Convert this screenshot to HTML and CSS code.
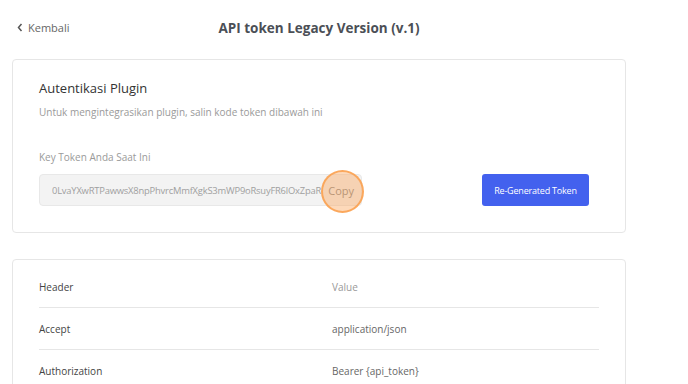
FILE: index.html
```html
<!DOCTYPE html>
<html lang="id">
<head>
<meta charset="utf-8">
<title>API token Legacy Version (v.1)</title>
<link rel="stylesheet" href="styles.css">
</head>
<body>
<div class="page">
  <header class="topbar">
    <a class="back" href="#">
      <svg class="chev" width="6" height="9" viewBox="0 0 6 9"><path d="M4.5 1 L1.5 4.5 L4.5 8" fill="none" stroke="#555" stroke-width="1.5"/></svg>
      <span>Kembali</span>
    </a>
    <h1 class="title">API token Legacy Version (v.1)</h1>
    <span></span>
  </header>

  <section class="card auth">
    <h2 class="auth-title">Autentikasi Plugin</h2>
    <p class="auth-sub">Untuk mengintegrasikan plugin, salin kode token dibawah ini</p>
    <label class="key-label">Key Token Anda Saat Ini</label>
    <div class="key-row">
      <div class="token-field">
        <span class="token-text">0LvaYXwRTPawwsX8npPhvrcMmfXgkS3mWP9oRsuyFR6lOxZpaR</span>
        <span class="copy">Copy<span class="click-ring"></span></span>
      </div>
      <button class="regen">Re-Generated Token</button>
    </div>
  </section>

  <section class="card table-card">
    <div class="row head"><span>Header</span><span class="val">Value</span></div>
    <div class="row"><span>Accept</span><span class="val">application/json</span></div>
    <div class="row"><span>Authorization</span><span class="val">Bearer {api_token}</span></div>
  </section>
</div>
</body>
</html>
```

FILE: styles.css
```css
* { box-sizing: border-box; }
body {
  margin: 0;
  background: #fff;
  font-family: "Open Sans", "Noto Sans", sans-serif;
  color: #333;
}
.page {
  width: 614px;
  margin-left: 12px;
}
.topbar {
  height: 59px;
  display: grid;
  grid-template-columns: 1fr auto 1fr;
  align-items: center;
  padding-bottom: 4px;
}
.back {
  display: flex;
  align-items: center;
  gap: 5px;
  padding-left: 5px;
  color: #666;
  text-decoration: none;
  font-size: 11px;
}
.title {
  margin: 0;
  font-size: 13.5px;
  font-weight: 700;
  color: #4b4f56;
}
.card {
  border: 1px solid #e6e6e6;
  border-radius: 4px;
  background: #fff;
}
.auth {
  height: 174px;
  padding: 18px 36px 0 26px;
}
.auth-title {
  margin: 0;
  font-size: 13px;
  font-weight: 400;
  color: #333;
  line-height: 20px;
}
.auth-sub {
  margin: 7px 0 0;
  font-size: 10px;
  color: #9a9a9a;
  line-height: 14px;
}
.key-label {
  display: block;
  margin-top: 31px;
  font-size: 10px;
  color: #9a9a9a;
  line-height: 14px;
}
.key-row {
  display: flex;
  justify-content: space-between;
  margin-top: 10px;
}
.token-field {
  position: relative;
  width: 323px;
  height: 32px;
  background: #f3f3f3;
  border: 1px solid #e8e8e8;
  border-radius: 4px;
  display: flex;
  align-items: center;
  padding-left: 12px;
}
.token-text {
  flex: 1;
  overflow: hidden;
  white-space: nowrap;
  font-size: 9.4px;
  color: #a0a0a0;
  letter-spacing: -0.2px;
}
.copy {
  position: relative;
  padding: 0 7px 0 3px;
  font-size: 11px;
  color: #8a8a8a;
}
.click-ring {
  position: absolute;
  left: 50%;
  top: 50%;
  width: 43px;
  height: 43px;
  margin: -20px 0 0 -22px;
  border-radius: 50%;
  background: rgba(250, 165, 90, 0.42);
  border: 2px solid rgba(250, 155, 70, 0.8);
}
.regen {
  width: 107px;
  height: 32px;
  border: none;
  border-radius: 3px;
  background: #4361ee;
  color: #fff;
  font-family: "Open Sans", sans-serif;
  font-size: 9px;
  letter-spacing: -0.2px;
  padding: 0;
}
.table-card {
  margin-top: 26px;
  padding: 6px 26px 0 26px;
  height: 140px;
}
.row {
  display: grid;
  grid-template-columns: 293px 1fr;
  height: 42px;
  align-items: center;
  border-bottom: 1px solid #e6e6e6;
  font-size: 10px;
  color: #444;
}
.row .val { color: #666; }
.row.head .val { color: #999; }
```
